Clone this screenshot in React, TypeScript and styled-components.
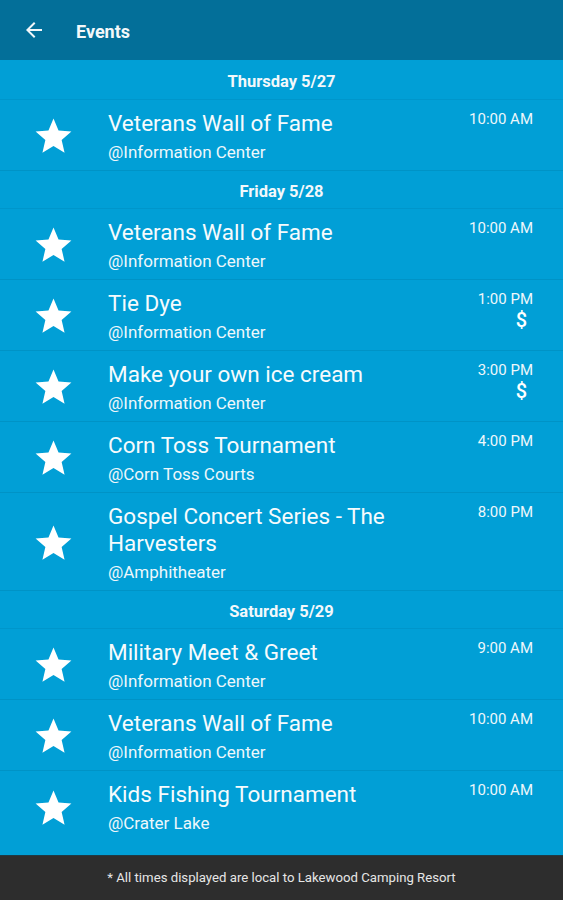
import React from "react";
import styled, { createGlobalStyle } from "styled-components";

const Global = createGlobalStyle`
  html, body { margin: 0; padding: 0; }
  body { font-family: Roboto, "Noto Sans", Arial, sans-serif; background: #019fd6; }
  * { box-sizing: border-box; }
`;

const Page = styled.div`
  width: 563px;
  height: 900px;
  display: flex;
  flex-direction: column;
  overflow: hidden;
  background: #019fd6;
  color: #fff;
`;

const TopBar = styled.header`
  height: 60px;
  flex: none;
  background: #036f99;
  display: flex;
  align-items: center;
  padding-left: 22px;
  gap: 30px;
`;

const Title = styled.h1`
  margin: 0;
  font-size: 18px;
  font-weight: 700;
  color: #f4f8fa;
  padding-top: 3px;
`;

const List = styled.div`
  flex: 1;
  overflow: hidden;
  display: flex;
  flex-direction: column;
`;

const DayHeader = styled.div<{ $h: number }>`
  height: ${(p) => p.$h}px;
  flex: none;
  display: flex;
  align-items: center;
  justify-content: center;
  padding-top: 3px;
  font-size: 16.5px;
  font-weight: 700;
  color: #f3f8fb;
  border-bottom: 1px solid rgba(0, 0, 0, 0.05);
`;

const Row = styled.div<{ $last?: boolean }>`
  flex: none;
  display: flex;
  align-items: stretch;
  padding: 10px 30px 7px 0;
  border-bottom: ${(p) => (p.$last ? "none" : "1px solid rgba(0, 0, 0, 0.07)")};
  min-height: 71px;
`;

const StarCell = styled.div`
  width: 108px;
  flex: none;
  display: flex;
  align-items: center;
  justify-content: center;
  padding-right: 2px;
`;

const Info = styled.div`
  flex: 1;
  display: flex;
  flex-direction: column;
  padding-right: 50px;
`;

const EventName = styled.div`
  font-size: 22.5px;
  line-height: 27px;
  color: #f6fbfd;
`;

const Place = styled.div`
  font-size: 17px;
  line-height: 22px;
  margin-top: 4px;
  color: #eef7fb;
`;

const Side = styled.div`
  flex: none;
  display: flex;
  flex-direction: column;
  align-items: flex-end;
  padding-top: 1px;
`;

const Time = styled.div`
  font-size: 15px;
  line-height: 16px;
  color: #eef7fb;
`;

const Dollar = styled.div`
  font-size: 20px;
  line-height: 22px;
  font-weight: 500;
  margin-top: 2px;
  margin-right: 6px;
`;

const Footer = styled.footer`
  height: 45px;
  flex: none;
  background: #2d2d2d;
  border-top: 1px solid #1f3a44;
  display: flex;
  align-items: center;
  justify-content: center;
  font-size: 13.2px;
  color: #e6e6e6;
  padding-bottom: 2px;
`;

const Star = () => (
  <svg width="43" height="43" viewBox="0 0 24 24" fill="#fff">
    <path d="M12 17.27L18.18 21l-1.64-7.03L22 9.24l-7.19-.61L12 2 9.19 8.63 2 9.24l5.46 4.73L5.82 21z" />
  </svg>
);

const BackArrow = () => (
  <svg width="24" height="24" viewBox="0 0 24 24" fill="#f2f7fa">
    <path d="M20 11H7.83l5.59-5.59L12 4l-8 8 8 8 1.41-1.41L7.830 13H20v-2z" />
  </svg>
);

type Ev = { name: string; place: string; time: string; paid?: boolean };
type Day = { label: string; h: number; events: Ev[] };

const days: Day[] = [
  {
    label: "Thursday 5/27",
    h: 40,
    events: [{ name: "Veterans Wall of Fame", place: "@Information Center", time: "10:00 AM" }],
  },
  {
    label: "Friday 5/28",
    h: 38,
    events: [
      { name: "Veterans Wall of Fame", place: "@Information Center", time: "10:00 AM" },
      { name: "Tie Dye", place: "@Information Center", time: "1:00 PM", paid: true },
      { name: "Make your own ice cream", place: "@Information Center", time: "3:00 PM", paid: true },
      { name: "Corn Toss Tournament", place: "@Corn Toss Courts", time: "4:00 PM" },
      { name: "Gospel Concert Series - The Harvesters", place: "@Amphitheater", time: "8:00 PM" },
    ],
  },
  {
    label: "Saturday 5/29",
    h: 38,
    events: [
      { name: "Military Meet & Greet", place: "@Information Center", time: "9:00 AM" },
      { name: "Veterans Wall of Fame", place: "@Information Center", time: "10:00 AM" },
      { name: "Kids Fishing Tournament", place: "@Crater Lake", time: "10:00 AM" },
    ],
  },
];

export default function App() {
  return (
    <Page>
      <Global />
      <TopBar>
        <BackArrow />
        <Title>Events</Title>
      </TopBar>
      <List>
        {days.map((d, di) => (
          <React.Fragment key={d.label}>
            <DayHeader $h={d.h}>{d.label}</DayHeader>
            {d.events.map((e, ei) => (
              <Row key={ei} $last={di === days.length - 1 && ei === d.events.length - 1}>
                <StarCell>
                  <Star />
                </StarCell>
                <Info>
                  <EventName>{e.name}</EventName>
                  <Place>{e.place}</Place>
                </Info>
                <Side>
                  <Time>{e.time}</Time>
                  {e.paid && <Dollar>$</Dollar>}
                </Side>
              </Row>
            ))}
          </React.Fragment>
        ))}
      </List>
      <Footer>* All times displayed are local to Lakewood Camping Resort</Footer>
    </Page>
  );
}
